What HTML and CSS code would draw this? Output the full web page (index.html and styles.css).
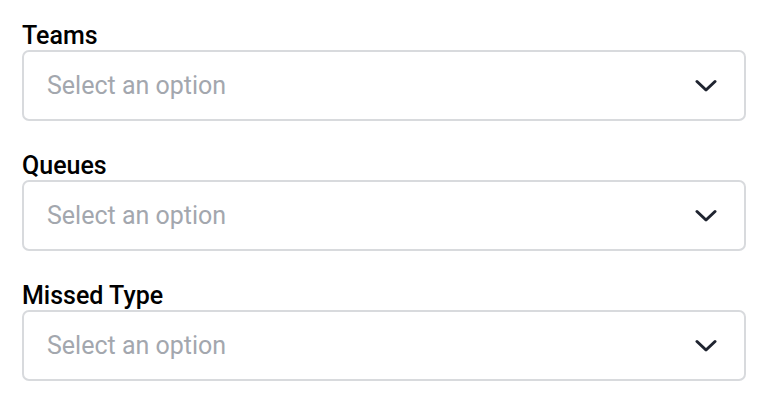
FILE: index.html
```html
<!DOCTYPE html>
<html>
<head>
<meta charset="utf-8">
<link rel="stylesheet" href="styles.css">
</head>
<body>
<div class="form">
  <div class="field">
    <label class="label">Teams</label>
    <div class="select">
      <span class="placeholder">Select an option</span>
      <svg class="chev" width="22" height="15" viewBox="0 0 22 15"><path d="M2 3.5 L11 12 L20 3.5" fill="none" stroke="#1f2430" stroke-width="3" stroke-linecap="round" stroke-linejoin="round"/></svg>
    </div>
  </div>
  <div class="field">
    <label class="label">Queues</label>
    <div class="select">
      <span class="placeholder">Select an option</span>
      <svg class="chev" width="22" height="15" viewBox="0 0 22 15"><path d="M2 3.5 L11 12 L20 3.5" fill="none" stroke="#1f2430" stroke-width="3" stroke-linecap="round" stroke-linejoin="round"/></svg>
    </div>
  </div>
  <div class="field">
    <label class="label">Missed Type</label>
    <div class="select">
      <span class="placeholder">Select an option</span>
      <svg class="chev" width="22" height="15" viewBox="0 0 22 15"><path d="M2 3.5 L11 12 L20 3.5" fill="none" stroke="#1f2430" stroke-width="3" stroke-linecap="round" stroke-linejoin="round"/></svg>
    </div>
  </div>
</div>
</body>
</html>
```
FILE: styles.css
```css
html, body {
  margin: 0;
  padding: 0;
  background: #ffffff;
}
body {
  font-family: Roboto, "Liberation Sans", sans-serif;
}
.form {
  padding: 22px 20px 0 22px;
  display: flex;
  flex-direction: column;
  gap: 31px;
}
.field {
  display: flex;
  flex-direction: column;
}
.label {
  font-size: 25px;
  font-weight: 500;
  color: #000;
  line-height: 28px;
}
.select {
  box-sizing: border-box;
  height: 71px;
  border: 2px solid #d8dadd;
  border-radius: 7px;
  display: flex;
  align-items: center;
  justify-content: space-between;
  padding: 0 27px 0 23px;
}
.placeholder {
  font-size: 25px;
  color: #a3a7ae;
}
.chev {
  display: block;
}
```
